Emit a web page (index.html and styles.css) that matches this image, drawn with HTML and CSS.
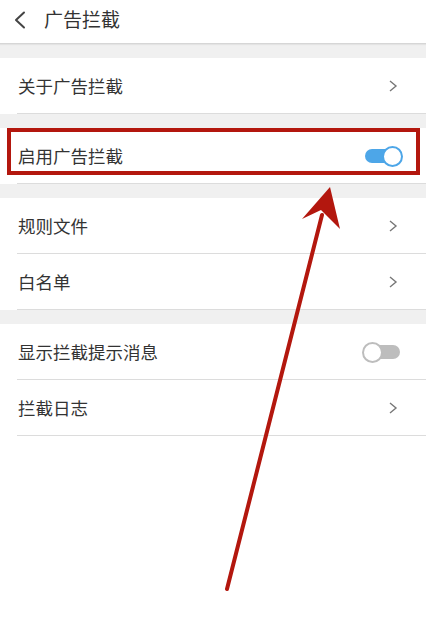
FILE: index.html
```html
<!DOCTYPE html>
<html lang="zh-CN">
<head>
<meta charset="utf-8">
<title>广告拦截</title>
<link rel="stylesheet" href="styles.css">
</head>
<body>
<div class="page">
  <header class="topbar">
    <svg class="back" width="14" height="18" viewBox="0 0 14 18"><polyline points="11,1.5 3,9 11,16.5" fill="none" stroke="#444" stroke-width="2" stroke-linecap="round" stroke-linejoin="round"/></svg>
    <span class="title">广告拦截</span>
  </header>

  <section class="group">
    <div class="row"><span class="label">关于广告拦截</span><svg class="chev" width="10" height="14" viewBox="0 0 10 14"><polyline points="2,2 8,7 2,12" fill="none" stroke="#777" stroke-width="1.4"/></svg></div>
  </section>

  <section class="group">
    <div class="row"><span class="label">启用广告拦截</span><span class="toggle on"><span class="knob"></span></span></div>
  </section>

  <section class="group">
    <div class="row"><span class="label">规则文件</span><svg class="chev" width="10" height="14" viewBox="0 0 10 14"><polyline points="2,2 8,7 2,12" fill="none" stroke="#777" stroke-width="1.4"/></svg></div>
    <div class="row"><span class="label">白名单</span><svg class="chev" width="10" height="14" viewBox="0 0 10 14"><polyline points="2,2 8,7 2,12" fill="none" stroke="#777" stroke-width="1.4"/></svg></div>
  </section>

  <section class="group">
    <div class="row"><span class="label">显示拦截提示消息</span><span class="toggle off"><span class="knob"></span></span></div>
    <div class="row"><span class="label">拦截日志</span><svg class="chev" width="10" height="14" viewBox="0 0 10 14"><polyline points="2,2 8,7 2,12" fill="none" stroke="#777" stroke-width="1.4"/></svg></div>
  </section>

  <div class="rest"></div>

  <div class="highlight"></div>
  <svg class="arrow" width="426" height="639" viewBox="0 0 426 639">
    <line x1="227" y1="589" x2="322" y2="215" stroke="#b3170e" stroke-width="4" stroke-linecap="round"/>
    <polygon points="330,187 302,219 321,210 340,229" fill="#b3170e"/>
  </svg>
</div>
</body>
</html>
```

FILE: styles.css
```css
* { box-sizing: border-box; }
html, body { margin: 0; padding: 0; }
body {
  background: #fff;
  font-family: "Noto Sans CJK SC", "Noto Sans", sans-serif;
  color: #333;
}
.page {
  position: relative;
  width: 426px;
  height: 639px;
  background: #f0f0f0;
  overflow: hidden;
  display: flex;
  flex-direction: column;
}
.topbar {
  height: 44px;
  background: #fff;
  border-bottom: 1px solid #d6d6d6;
  box-shadow: 0 1px 1px rgba(0,0,0,0.05);
  display: flex;
  align-items: center;
  padding-left: 13px;
  gap: 17px;
}
.back { display: block; margin-top: -4px; }
.title {
  font-size: 19px;
  color: #333;
  line-height: 1;
  margin-top: -6px;
}
.group {
  margin-top: 14px;
  background: #fff;
}
.row {
  position: relative;
  height: 56px;
  display: flex;
  align-items: center;
  justify-content: space-between;
  padding-left: 18px;
  padding-right: 28px;
}
.row::after {
  content: "";
  position: absolute;
  left: 17px;
  right: 0;
  bottom: 0;
  height: 1px;
  background: #dcdcdc;
}
.label {
  font-size: 17.5px;
  line-height: 1;
  color: #333;
}
.chev { display: block; }
.toggle {
  position: relative;
  width: 38px;
  height: 22px;
  margin-right: -5px;
  display: block;
}
.toggle::before {
  content: "";
  position: absolute;
  top: 4px;
  height: 14px;
  border-radius: 7px;
}
.toggle.on::before { left: 0; right: 6px; background: #4da6e8; }
.toggle.off::before { left: 6px; right: 0; background: #bdbdbd; }
.toggle.off { margin-right: -2px; }
.knob {
  position: absolute;
  top: 0.5px;
  width: 21px;
  height: 21px;
  border-radius: 50%;
  background: #fff;
}
.toggle.on .knob { right: 0; border: 2px solid #4da6e8; }
.toggle.off .knob { left: 0; border: 2px solid #bdbdbd; }
.rest {
  flex: 1;
  background: #fff;
}
.highlight {
  position: absolute;
  left: 7px;
  top: 128px;
  width: 413px;
  height: 47px;
  border: 4px solid #b3170e;
}
.arrow {
  position: absolute;
  left: 0;
  top: 0;
  pointer-events: none;
}
```
